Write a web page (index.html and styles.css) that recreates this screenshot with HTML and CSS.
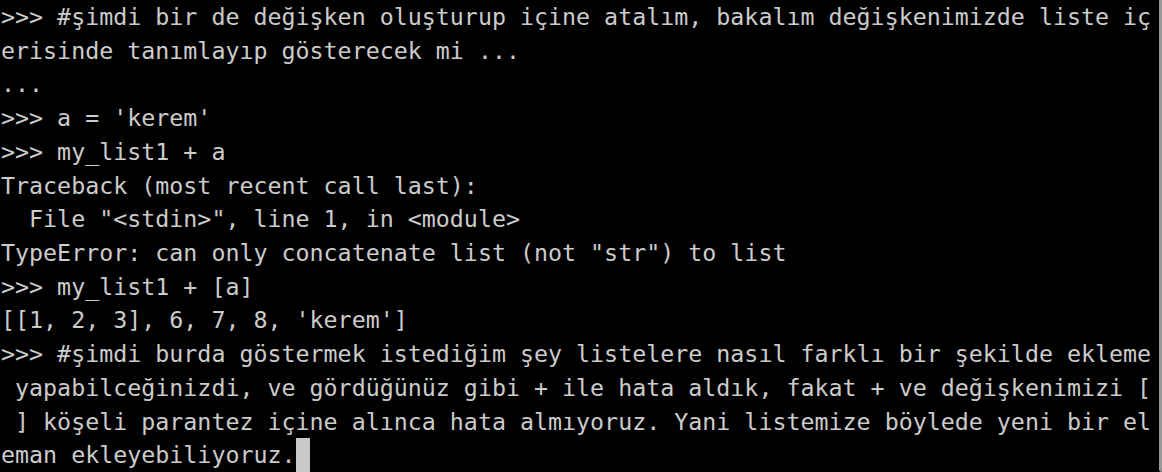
FILE: index.html
```html
<!DOCTYPE html>
<html lang="tr">
<head>
<meta charset="utf-8">
<link rel="stylesheet" href="styles.css">
</head>
<body>
<div class="term">
<div class="screen">
<div class="line">&gt;&gt;&gt; #şimdi bir de değişken oluşturup içine atalım, bakalım değişkenimizde liste iç</div>
<div class="line">erisinde tanımlayıp gösterecek mi ...</div>
<div class="line">...</div>
<div class="line">&gt;&gt;&gt; a = 'kerem'</div>
<div class="line">&gt;&gt;&gt; my_list1 + a</div>
<div class="line">Traceback (most recent call last):</div>
<div class="line">  File "&lt;stdin&gt;", line 1, in &lt;module&gt;</div>
<div class="line">TypeError: can only concatenate list (not "str") to list</div>
<div class="line">&gt;&gt;&gt; my_list1 + [a]</div>
<div class="line">[[1, 2, 3], 6, 7, 8, 'kerem']</div>
<div class="line">&gt;&gt;&gt; #şimdi burda göstermek istediğim şey listelere nasıl farklı bir şekilde ekleme</div>
<div class="line"> yapabilceğinizdi, ve gördüğünüz gibi + ile hata aldık, fakat + ve değişkenimizi [</div>
<div class="line"> ] köşeli parantez içine alınca hata almıyoruz. Yani listemize böylede yeni bir el</div>
<div class="line">eman ekleyebiliyoruz.<span class="cursor"></span></div>
</div>
<div class="edge"></div>
</div>
</body>
</html>
```
FILE: styles.css
```css
html, body {
  margin: 0;
  padding: 0;
  background: #000;
}
.term {
  width: 1162px;
  height: 472px;
  display: flex;
  overflow: hidden;
  background: #000;
}
.screen {
  flex: 1;
  display: flex;
  flex-direction: column;
  padding-left: 1px;
  font-family: "DejaVu Sans Mono", monospace;
  font-size: 23.3px;
  color: #cbcbcb;
}
.line {
  height: 33.72px;
  line-height: 33.72px;
  white-space: pre;
}
.cursor {
  display: inline-block;
  width: 14px;
  height: 34px;
  background: #c8c8c8;
  vertical-align: top;
}
.edge {
  width: 3px;
  background: #9a9a9a;
  border-bottom-left-radius: 3px;
}
```
